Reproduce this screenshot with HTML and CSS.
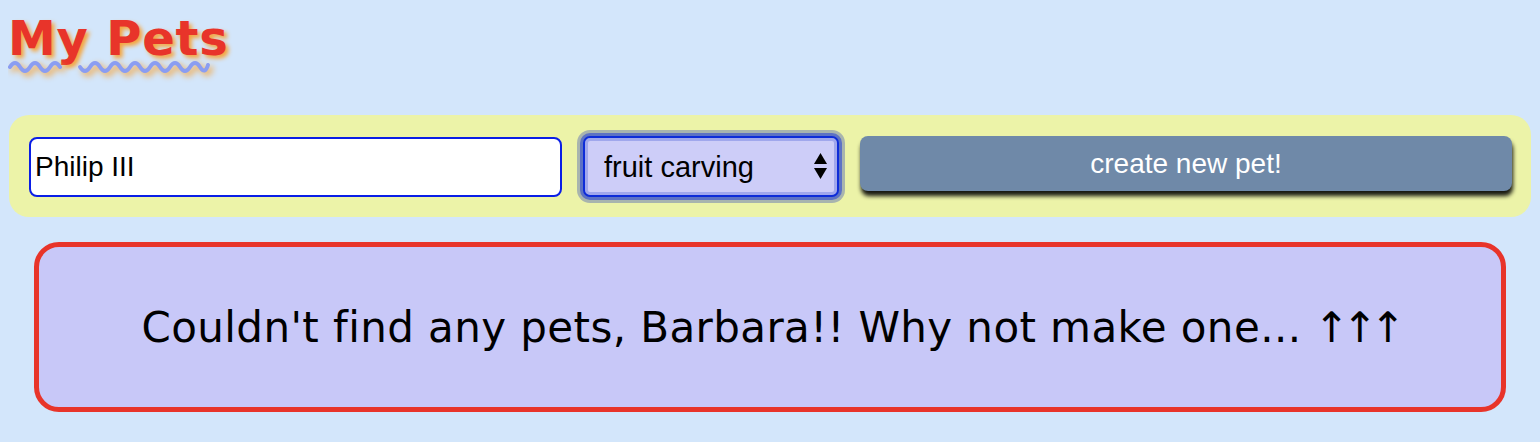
FILE: index.html
```html
<!DOCTYPE html>
<html lang="en">
<head>
<meta charset="utf-8">
<title>My Pets</title>
<link rel="stylesheet" href="styles.css">
</head>
<body>
<h1 class="title">My Pets<svg class="title-wave" width="204" height="18" viewBox="0 0 204 18" aria-hidden="true"><path d="M2 9 Q7 1 12 9 T22 9 T32 9 T42 9 T52 9" /><path d="M72 9 Q77 17 82 9 T92 9 T102 9 T112 9 T122 9 T132 9 T142 9 T152 9 T162 9 T172 9 T182 9 T192 9 T200 7" /></svg></h1>
<form class="panel">
  <input class="name-input" type="text" value="Philip III">
  <div class="select-wrap">
    <select class="type-select">
      <option>fruit carving</option>
    </select>
    <svg class="select-arrows" width="13" height="26" viewBox="0 0 13 26" aria-hidden="true">
      <polygon points="0,11 6.5,0 13,11" fill="#000"/>
      <polygon points="0,15 13,15 6.5,26" fill="#000"/>
    </svg>
  </div>
  <button class="create-btn" type="button">create new pet!</button>
</form>
<div class="empty-msg">Couldn't find any pets, Barbara!! Why not make one... <span class="arrows">↑↑↑</span></div>
</body>
</html>
```

FILE: styles.css
```css
body {
  margin: 8px;
  background: #d3e6fb;
  font-family: "DejaVu Sans", sans-serif;
}

.title {
  position: relative;
  margin: 2px 0 0 0;
  font: bold 48px "DejaVu Sans", sans-serif;
  letter-spacing: 0.8px;
  color: #e8342a;
  text-shadow: 3px 3px 4px #f6a43a;
}

.title-wave {
  position: absolute;
  left: 0;
  top: 48px;
  fill: none;
  stroke: #8a9df2;
  stroke-width: 4;
  stroke-linecap: round;
  filter: drop-shadow(3px 3px 3px #f6a43a);
}

.panel {
  display: flex;
  align-items: flex-start;
  gap: 21px;
  margin: 49px 1px 0;
  padding: 21px 19px 20px 20px;
  background: #ecf3a8;
  border-radius: 20px;
}

.name-input {
  box-sizing: border-box;
  width: 533px;
  height: 60px;
  margin: 1px 0 0;
  padding: 0 4px;
  border: 2px solid #0a1ee6;
  border-radius: 8px;
  background: #fff;
  color: #000;
  font: 28px "Liberation Sans", Arial, sans-serif;
  outline: none;
}

.select-wrap {
  position: relative;
  width: 256px;
  height: 61px;
}

.type-select {
  -webkit-appearance: none;
  appearance: none;
  box-sizing: border-box;
  width: 100%;
  height: 100%;
  margin: 0;
  padding: 0 0 0 19px;
  border: 2px solid #0d2cd8;
  border-radius: 7px;
  background: #cdcdf8;
  color: #000;
  font: 29px "Liberation Sans", Arial, sans-serif;
  box-shadow: inset 0 0 0 3px #a0a7ec, 0 0 0 3px #5d72c4, 0 0 0 6px #a8b4ae;
  outline: none;
}

.select-arrows {
  position: absolute;
  right: 12px;
  top: 17px;
  pointer-events: none;
}

.create-btn {
  flex: 1;
  height: 55px;
  margin: 0;
  padding: 0;
  border: none;
  border-radius: 8px;
  background: #6f89a8;
  color: #fff;
  font: 28px "Liberation Sans", Arial, sans-serif;
  box-shadow: 1px 5px 4px rgba(0, 0, 0, 0.9);
}

.empty-msg {
  box-sizing: border-box;
  height: 170px;
  margin: 25px 26px 0;
  display: flex;
  align-items: center;
  justify-content: center;
  border: 5px solid #e8342a;
  border-radius: 25px;
  background: #c8c8f8;
  color: #000;
  font: 42px "DejaVu Sans", sans-serif;
  letter-spacing: 0.4px;
}

.arrows {
  letter-spacing: -7px;
  margin-left: 0.3em;
}
```
